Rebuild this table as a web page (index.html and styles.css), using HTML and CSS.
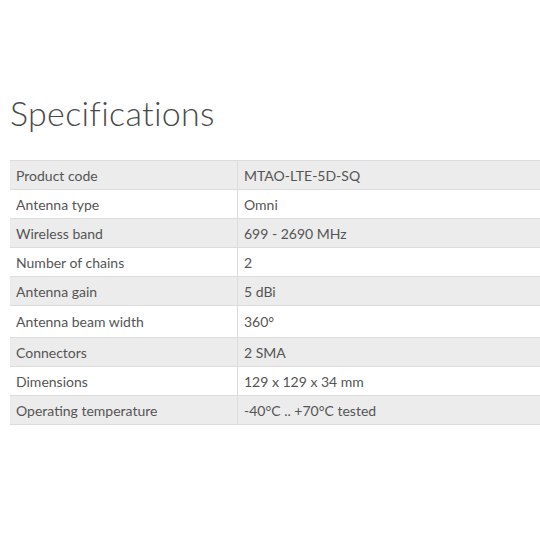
FILE: index.html
```html
<!DOCTYPE html>
<html>
<head>
<meta charset="utf-8">
<link rel="stylesheet" href="styles.css">
</head>
<body>
<main class="page">
  <h1 class="title">Specifications</h1>
  <table class="specs">
    <tbody>
      <tr><td class="key">Product code</td><td class="val">MTAO-LTE-5D-SQ</td></tr>
      <tr><td class="key">Antenna type</td><td class="val">Omni</td></tr>
      <tr><td class="key">Wireless band</td><td class="val">699 - 2690 MHz</td></tr>
      <tr><td class="key">Number of chains</td><td class="val">2</td></tr>
      <tr><td class="key">Antenna gain</td><td class="val">5 dBi</td></tr>
      <tr class="tall"><td class="key">Antenna beam width</td><td class="val">360°</td></tr>
      <tr><td class="key">Connectors</td><td class="val">2 SMA</td></tr>
      <tr><td class="key">Dimensions</td><td class="val">129 x 129 x 34 mm</td></tr>
      <tr><td class="key">Operating temperature</td><td class="val">-40°C .. +70°C tested</td></tr>
    </tbody>
  </table>
</main>
</body>
</html>
```
FILE: styles.css
```css
html, body {
  margin: 0;
  padding: 0;
  background: #ffffff;
}
body {
  font-family: Lato, "Open Sans", sans-serif;
  color: #555555;
  overflow: hidden;
}
.page {
  padding: 91px 0 0 10px;
}
.title {
  margin: 0;
  font-weight: 300;
  font-size: 34px;
  line-height: 44px;
  color: #4a4a4a;
  letter-spacing: 0.3px;
}
.specs {
  margin-top: 25px;
  width: 540px;
  border-collapse: collapse;
  font-size: 14px;
}
.specs td {
  height: 28px;
  padding: 0 6px;
  border-top: 1px solid #dcdcdc;
  border-bottom: 1px solid #dcdcdc;
  vertical-align: middle;
}
.specs tr:nth-child(odd) td {
  background: #ececec;
}
.specs .key {
  width: 215px;
  border-right: 1px solid #dcdcdc;
}
.specs tr.tall td {
  height: 31px;
}
```
